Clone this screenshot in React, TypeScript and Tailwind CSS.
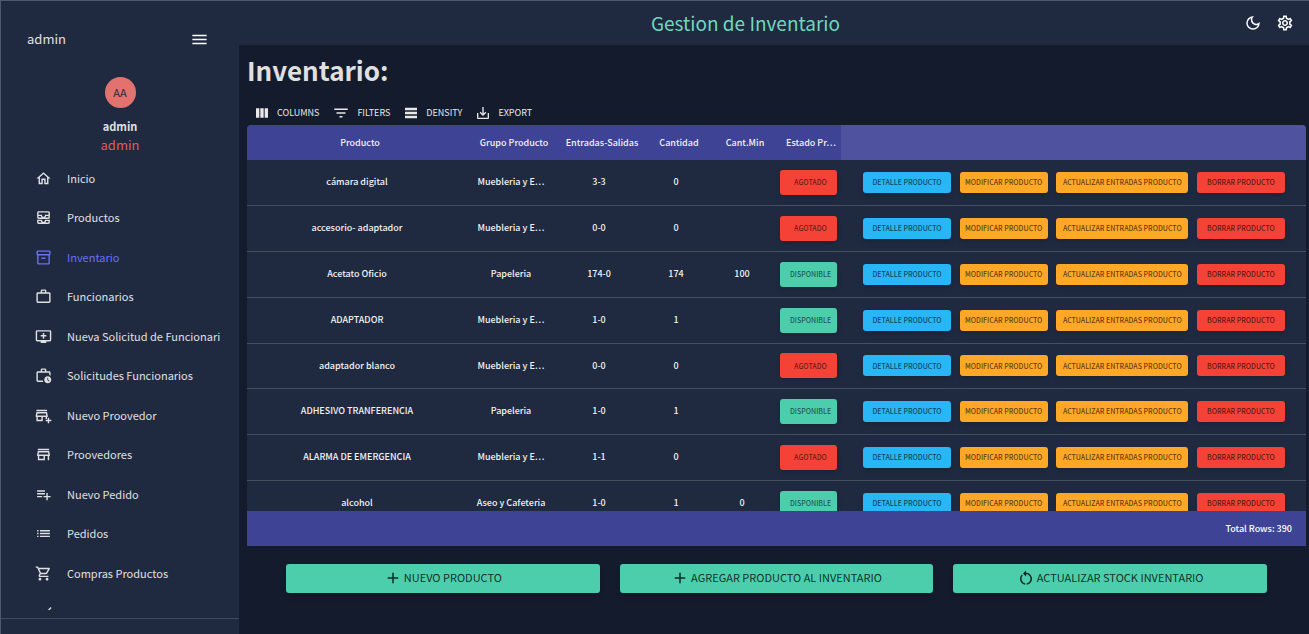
import type { ReactNode } from "react";
import type { IconType } from "react-icons";
import {
  MdAdd,
  MdAddToQueue,
  MdFilterList,
  MdList,
  MdMenu,
  MdOutlineAddBusiness,
  MdOutlineAllInbox,
  MdOutlineDarkMode,
  MdOutlineHome,
  MdOutlineInventory2,
  MdOutlineSettings,
  MdOutlineShoppingCart,
  MdOutlineStore,
  MdOutlineWorkHistory,
  MdPlaylistAdd,
  MdRestartAlt,
  MdSaveAlt,
  MdShowChart,
  MdWorkOutline,
} from "react-icons/md";

type MenuEntry = { label: string; icon: IconType; active?: boolean };

const menu: MenuEntry[] = [
  { label: "Inicio", icon: MdOutlineHome },
  { label: "Productos", icon: MdOutlineAllInbox },
  { label: "Inventario", icon: MdOutlineInventory2, active: true },
  { label: "Funcionarios", icon: MdWorkOutline },
  { label: "Nueva Solicitud de Funcionari", icon: MdAddToQueue },
  { label: "Solicitudes Funcionarios", icon: MdOutlineWorkHistory },
  { label: "Nuevo Proovedor", icon: MdOutlineAddBusiness },
  { label: "Proovedores", icon: MdOutlineStore },
  { label: "Nuevo Pedido", icon: MdPlaylistAdd },
  { label: "Pedidos", icon: MdList },
  { label: "Compras Productos", icon: MdOutlineShoppingCart },
];

type Row = {
  name: string;
  group: string;
  flow: string;
  qty: string;
  min: string;
  available: boolean;
};

const rows: Row[] = [
  { name: "cámara digital", group: "Muebleria y E…", flow: "3-3", qty: "0", min: "", available: false },
  { name: "accesorio- adaptador", group: "Muebleria y E…", flow: "0-0", qty: "0", min: "", available: false },
  { name: "Acetato Oficio", group: "Papeleria", flow: "174-0", qty: "174", min: "100", available: true },
  { name: "ADAPTADOR", group: "Muebleria y E…", flow: "1-0", qty: "1", min: "", available: true },
  { name: "adaptador blanco", group: "Muebleria y E…", flow: "0-0", qty: "0", min: "", available: false },
  { name: "ADHESIVO TRANFERENCIA", group: "Papeleria", flow: "1-0", qty: "1", min: "", available: true },
  { name: "ALARMA DE EMERGENCIA", group: "Muebleria y E…", flow: "1-1", qty: "0", min: "", available: false },
  { name: "alcohol", group: "Aseo y Cafeteria", flow: "1-0", qty: "1", min: "0", available: true },
];

const headers = ["Producto", "Grupo Producto", "Entradas-Salidas", "Cantidad", "Cant.Min", "Estado Pr…"];

function DensityIcon({ className }: { className?: string }) {
  return (
    <svg viewBox="0 0 24 24" fill="currentColor" className={className} aria-hidden="true">
      <path d="M3 4h18v4H3zM3 10h18v4H3zM3 16h18v4H3z" />
    </svg>
  );
}

function ColumnsIcon({ className }: { className?: string }) {
  return (
    <svg viewBox="0 0 24 24" fill="currentColor" className={className} aria-hidden="true">
      <path d="M3 5h5v14H3zM9.500 5h5v14h-5zM16 5h5v14h-5z" />
    </svg>
  );
}

function ToolButton({ icon, children }: { icon: ReactNode; children: ReactNode }) {
  return (
    <button type="button" className="flex items-center gap-[7px] text-[9px] leading-4 text-[#e8e8e8]">
      {icon}
      {children}
    </button>
  );
}

function ActionButton({ className, children }: { className: string; children: ReactNode }) {
  return (
    <button
      type="button"
      className={`h-[21px] shrink-0 rounded-[3px] text-[7px] leading-3 font-medium whitespace-nowrap text-black/65 shadow-md ${className}`}
    >
      {children}
    </button>
  );
}

function BigButton({ icon: Icon, children }: { icon: IconType; children: ReactNode }) {
  return (
    <button
      type="button"
      className="flex h-[29px] items-center justify-center gap-0.5 rounded-[3px] bg-[#4cceac] pb-0.5 text-[11px] text-black/80 shadow-md"
    >
      <Icon className="size-[18px]" />
      {children}
    </button>
  );
}

export default function App() {
  return (
    <div className="flex h-screen overflow-hidden border-t border-[#4b5b6d] bg-[#141b2d] font-['Noto_Sans_CJK_SC',sans-serif] text-[#e0e0e0]">
      <aside className="flex w-[239px] shrink-0 flex-col border-l border-[#4b5b6d] bg-[#1f2a40]">
        <div className="flex h-[76px] items-center justify-between pr-[30px] pl-[26px]">
          <span className="text-[13px] leading-5">admin</span>
          <button type="button" aria-label="Menu" className="text-white">
            <MdMenu className="size-[19px]" />
          </button>
        </div>
        <div className="flex flex-col items-center">
          <div className="flex size-[31px] items-center justify-center rounded-full bg-[#e2726e] text-[11px] text-[#1f2a40]">
            AA
          </div>
          <p className="mt-2 text-[11px] leading-5 font-bold">admin</p>
          <p className="text-[13px] leading-[18px] text-[#db5f5c]">admin</p>
        </div>
        <nav className="mt-1 min-h-0 flex-1 overflow-hidden">
          <ul>
            {menu.map(({ label, icon: Icon, active }) => (
              <li key={label} className="odd:h-10 even:h-[39px]">
                <a
                  href="#"
                  className={`flex h-full items-center gap-[15px] pl-[34px] text-[11px] whitespace-nowrap ${active ? "text-[#6870fa]" : ""}`}
                >
                  <Icon className="size-[17px] shrink-0" />
                  {label}
                </a>
              </li>
            ))}
            <li className="flex h-9 items-center pl-[35px]">
              <MdShowChart className="size-[17px]" />
            </li>
          </ul>
        </nav>
        <div className="mt-2 h-4 shrink-0 border-t border-[#3c4a60]" />
      </aside>

      <main className="flex min-w-0 flex-1 flex-col">
        <header className="flex h-11 shrink-0 items-center bg-[#1f2a40] pr-[15px] pl-2">
          <p className="flex-1 text-center text-[19px] leading-6 text-[#70d8bd]">Gestion de Inventario</p>
          <div className="flex gap-[14px] text-white">
            <button type="button" aria-label="Modo oscuro">
              <MdOutlineDarkMode className="size-[18px]" />
            </button>
            <button type="button" aria-label="Ajustes">
              <MdOutlineSettings className="size-[18px]" />
            </button>
          </div>
        </header>

        <div className="flex min-h-0 flex-1 flex-col pr-[3px] pb-[41px] pl-2">
          <h1 className="mt-[7px] text-[26px] leading-9 font-bold">Inventario:</h1>
          <div className="mt-[15px] mb-0.5 flex h-5 shrink-0 items-center gap-[13px] pl-[7px]">
            <ToolButton icon={<ColumnsIcon className="size-4" />}>COLUMNS</ToolButton>
            <ToolButton icon={<MdFilterList className="size-[18px]" />}>FILTERS</ToolButton>
            <ToolButton icon={<DensityIcon className="size-4" />}>DENSITY</ToolButton>
            <ToolButton icon={<MdSaveAlt className="size-4" />}>EXPORT</ToolButton>
          </div>

          <div className="min-h-0 flex-1 overflow-hidden rounded-t bg-[#1f2a40]">
            <table className="w-full table-fixed text-center text-[9px] leading-4 font-medium text-[#f2f2f2]">
              <colgroup>
                <col className="w-[220px]" />
                <col className="w-[88px]" />
                <col className="w-[88px]" />
                <col className="w-[66px]" />
                <col className="w-[66px]" />
                <col className="w-[66px]" />
                <col />
              </colgroup>
              <thead>
                <tr className="h-[35px] bg-[#3e4396]">
                  {headers.map((h) => (
                    <th key={h} scope="col" className="pl-[6px] font-medium whitespace-nowrap">
                      {h}
                    </th>
                  ))}
                  <td className="bg-[#4e529f]" />
                </tr>
              </thead>
              <tbody>
                {rows.map((r) => (
                  <tr
                    key={r.name}
                    className="h-[46px] border-b border-[#45505f] [&:nth-child(4n+1)]:h-[45px]"
                  >
                    <td>{r.name}</td>
                    <td className="whitespace-nowrap">{r.group}</td>
                    <td>{r.flow}</td>
                    <td>{r.qty}</td>
                    <td>{r.min}</td>
                    <td>
                      <span
                        className={`ml-[5px] flex h-[25px] w-[57px] items-center justify-center rounded-[3px] pl-1 text-[7px] text-black/60 shadow-md ${r.available ? "bg-[#4cceac]" : "bg-[#f44336]"}`}
                      >
                        {r.available ? "DISPONIBLE" : "AGOTADO"}
                      </span>
                    </td>
                    <td>
                      <div className="flex justify-between pr-[21px] pl-[22px]">
                        <ActionButton className="w-[88px] bg-[#29b6f6]">DETALLE PRODUCTO</ActionButton>
                        <ActionButton className="w-[88px] bg-[#ffa726]">MODIFICAR PRODUCTO</ActionButton>
                        <ActionButton className="w-[132px] bg-[#ffa726]">ACTUALIZAR ENTRADAS PRODUCTO</ActionButton>
                        <ActionButton className="w-[88px] bg-[#f44336]">BORRAR PRODUCTO</ActionButton>
                      </div>
                    </td>
                  </tr>
                ))}
              </tbody>
            </table>
          </div>
          <div className="flex h-[35px] shrink-0 items-center justify-end bg-[#3e4396] pr-[14px] text-[9px] font-medium text-white">
            Total Rows: 390
          </div>

          <div className="mt-[18px] grid shrink-0 grid-cols-3 gap-5 px-[39px]">
            <BigButton icon={MdAdd}>NUEVO PRODUCTO</BigButton>
            <BigButton icon={MdAdd}>AGREGAR PRODUCTO AL INVENTARIO</BigButton>
            <BigButton icon={MdRestartAlt}>ACTUALIZAR STOCK INVENTARIO</BigButton>
          </div>
        </div>
      </main>
    </div>
  );
}
